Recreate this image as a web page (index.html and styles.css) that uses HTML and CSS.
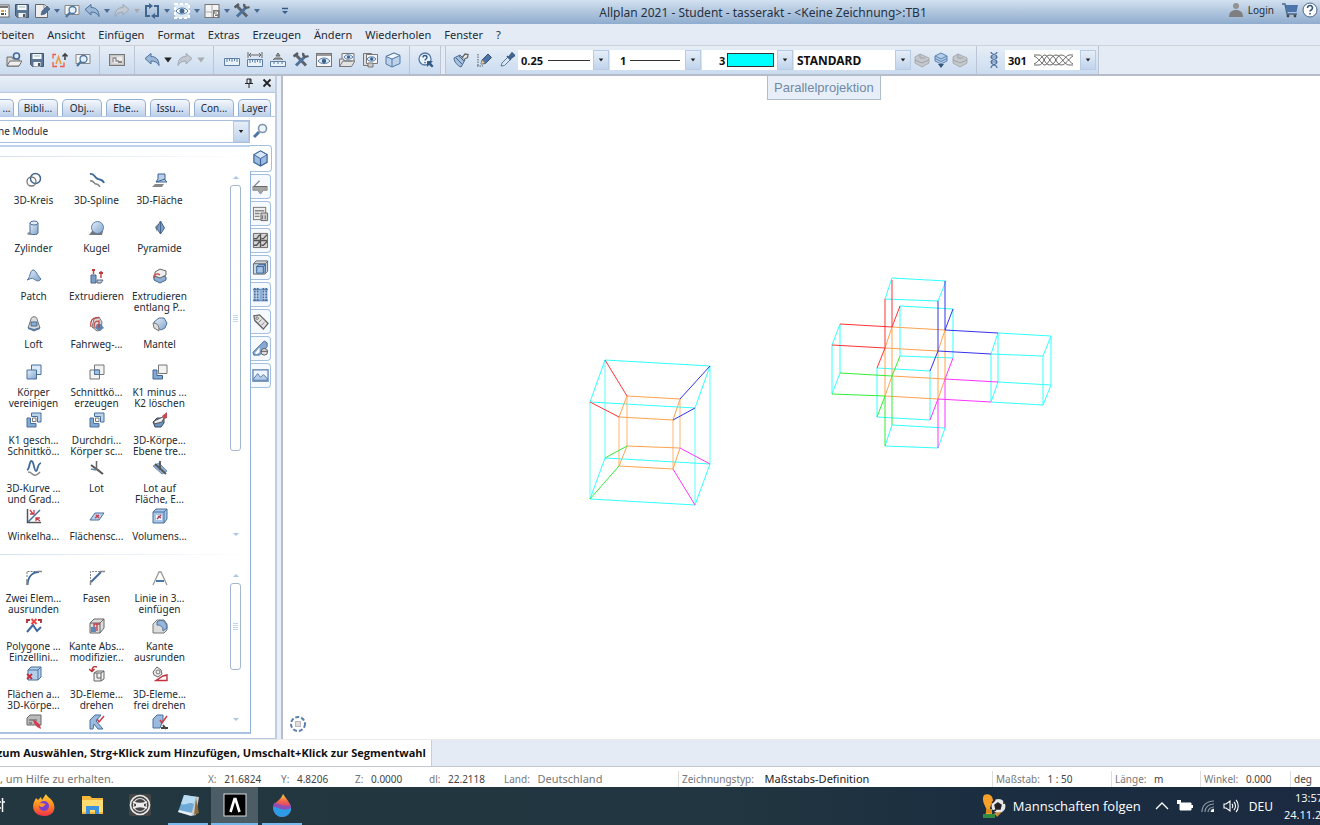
FILE: index.html
```html
<!DOCTYPE html>
<html lang="de">
<head>
<meta charset="utf-8">
<title>Allplan 2021</title>
<link rel="stylesheet" href="styles.css">
</head>
<body>
<svg class="defs" aria-hidden="true">
  <defs>
    <linearGradient id="steel" x1="0" y1="0" x2="1" y2="1"><stop offset="0" stop-color="#e6f0fa"/><stop offset="1" stop-color="#7fa3cc"/></linearGradient>
    <linearGradient id="fire" x1="0" y1="0" x2="0" y2="1"><stop offset="0" stop-color="#ffd43a"/><stop offset=".5" stop-color="#ff8a1f"/><stop offset="1" stop-color="#f0304a"/></linearGradient>
    <linearGradient id="drop" x1="0" y1="0" x2="0" y2="1"><stop offset="0" stop-color="#ffd23c"/><stop offset=".3" stop-color="#f0694a"/><stop offset=".5" stop-color="#e0476e"/></linearGradient>
  </defs>
  <symbol id="grid" viewBox="0 0 16 16"><rect x="1" y="2" width="14" height="12" fill="#fff" stroke="#666"/><path d="M2 3h12v2H2z" fill="#777"/><path d="M3 8h9" stroke="#e8a33a" stroke-width="2" stroke-dasharray="3 1"/><path d="M3 11h9" stroke="#555" stroke-width="2" stroke-dasharray="3 1"/></symbol>
  <symbol id="save" viewBox="0 0 16 16"><path d="M1.500 1.500h13v13h-11l-2-2z" fill="#5c7796" stroke="#46566b"/><path d="M3.500 2h9v5h-9z" fill="#f4f8fc"/><path d="M5 4h6" stroke="#9bb"/><path d="M4.500 10h7v4.500h-7z" fill="#f2f2f2"/><path d="M9 11h2v3H9z" fill="#46566b"/></symbol>
  <symbol id="docpen" viewBox="0 0 16 16"><path d="M1.500 1.500h9l3 3v10h-12z" fill="#eee" stroke="#666"/><path d="M10 1.500v4h4" fill="#fff" stroke="#888"/><path d="M7 12l1-4 5-5 3 3-5 5z" fill="#4f6f95" stroke="#3b5370" stroke-width=".6"/></symbol>
  <symbol id="preview" viewBox="0 0 16 16"><path d="M1 2.500h14v9H1z" fill="#f3f3f3" stroke="#888"/><circle cx="8.500" cy="7" r="3.500" fill="#e5f0fb" stroke="#4a739f" stroke-width="1.300"/><path d="M6 9.500l-4 4.500" stroke="#4a739f" stroke-width="2.200"/></symbol>
  <symbol id="undo" viewBox="0 0 16 16"><path d="M1 6.500L7 1.500v3c5 0 8 3 8 9-1.500-3-4-4.500-8-4.500v3z" fill="#9db8d6" stroke="#4a6f9b"/></symbol>
  <symbol id="redo" viewBox="0 0 16 16"><path d="M15 6.500L9 1.500v3c-5 0-8 3-8 9 1.500-3 4-4.500 8-4.500v3z" fill="#c3c9d0" stroke="#9ea7b2"/></symbol>
  <symbol id="loop" viewBox="0 0 16 16"><path d="M6 3H2v10h4M10 13h4V3h-4" fill="none" stroke="#41658f" stroke-width="2"/><path d="M5 0l4 3-4 3zM11 10l-4 3 4 3z" fill="#41658f"/></symbol>
  <symbol id="eyebox" viewBox="0 0 16 16"><rect x="1" y="1" width="14" height="14" fill="#dbe8f5" stroke="#fff" stroke-width="2" stroke-dasharray="3 2"/><path d="M2 8c3-4 9-4 12 0-3 4-9 4-12 0z" fill="#fff" stroke="#5a7ea8"/><circle cx="8" cy="8" r="2.500" fill="#44698f"/></symbol>
  <symbol id="split" viewBox="0 0 16 16"><rect x="1" y="1.500" width="14" height="13" fill="#f4f4f4" stroke="#777"/><path d="M8 2v12M2 9h6" stroke="#aaa"/><path d="M9 7h6.500v8H9z" fill="#777"/><path d="M10.500 9h3v2h-3v2.500h3" fill="none" stroke="#fff"/></symbol>
  <symbol id="tools" viewBox="0 0 16 16"><path d="M3 3l10 10.500" stroke="#5e636b" stroke-width="3"/><path d="M12.500 4L3 13.500" stroke="#4c739d" stroke-width="3"/><path d="M.5 4.500L5 1M10.500 1c-1 3 1 4.500 5 3" fill="none" stroke="#555b63" stroke-width="2.400"/></symbol>
  <symbol id="open" viewBox="0 0 16 16"><path d="M1 5h5l1 2h6v7H1z" fill="#d7d7d7" stroke="#6c6c6c"/><path d="M1 14l3-5h12l-3 5z" fill="#efefef" stroke="#6c6c6c"/><circle cx="10.500" cy="4" r="3" fill="#dceafa" stroke="#41689a" stroke-width="1.600"/></symbol>
  <symbol id="exporta" viewBox="0 0 16 16"><path d="M4 2.500H1v4M1 10v4.500h4M8 14.500h4v-4" fill="none" stroke="#ee5a45" stroke-width="1.300"/><path d="M4 12l2.500-7L9 12" fill="none" stroke="#ef9a3e" stroke-width="1.600"/><path d="M13 8V2M10.500 4.500L13 2l2.500 2.500" fill="none" stroke="#444" stroke-width="1.600"/></symbol>
  <symbol id="sheet" viewBox="0 0 16 16"><rect x=".5" y="2.500" width="15" height="11" fill="#c4c4c4" stroke="#777"/><path d="M2.500 4.500h11v7h-11z" fill="#ededed"/><path d="M4 10.500V6h3v3h3" fill="none" stroke="#8a8a8a" stroke-width="1.300"/><path d="M9 9h4v2H9z" fill="#888"/></symbol>
  <symbol id="ruler" viewBox="0 0 16 16"><path d="M.5 6.500h15v7H.5z" fill="#e9f1fa" stroke="#5c7da4"/><path d="M3 7v3M5.500 7v2M8 7v3M10.500 7v2M13 7v3" stroke="#5c7da4"/></symbol>
  <symbol id="rulerw" viewBox="0 0 16 16"><path d="M.5 7.500h15v7H.5z" fill="#e9f1fa" stroke="#5c7da4"/><path d="M3 8v3M5.500 8v2M8 8v3M10.500 8v2M13 8v3" stroke="#5c7da4"/><path d="M1 0v6M15 0v6M2 3h12M4 1L2 3l2 2M12 1l2 2-2 2" fill="none" stroke="#666"/></symbol>
  <symbol id="rulera" viewBox="0 0 16 16"><path d="M.5 9.500h15v5H.5z" fill="#e9f1fa" stroke="#5c7da4"/><path d="M4 10v2M8 10v2M12 10v2" stroke="#5c7da4"/><path d="M3 8l2-2h6l2 2M6 4l2-3 2 3z" fill="#999" stroke="#666"/></symbol>
  <symbol id="eyewin" viewBox="0 0 16 16"><rect x=".5" y="1.500" width="15" height="13" fill="#f4f6f8" stroke="#777"/><path d="M1 2h14v2H1z" fill="#999"/><path d="M2 9c3-4 9-4 12 0-3 3.500-9 3.500-12 0z" fill="#dcebfa" stroke="#5a7ea8"/><circle cx="8" cy="9" r="2.200" fill="#3b628e"/></symbol>
  <symbol id="eyefolder" viewBox="0 0 16 16"><path d="M3 8V1.500h12V9" fill="#f3f3f3" stroke="#777"/><path d="M5 5c2-3 6-3 9 0-3 3-7 3-9 0z" fill="#dcebfa" stroke="#5a7ea8"/><circle cx="9.500" cy="5" r="1.600" fill="#3b628e"/><path d="M.5 14.500V7h4l1 2h8M.5 14.500L4 9h12l-3.500 5.500z" fill="#e2e2e2" stroke="#777"/></symbol>
  <symbol id="eyepages" viewBox="0 0 16 16"><path d="M1.500 1.500h8v12h-8z" fill="#ddd" stroke="#777"/><path d="M4.500 2.500h11v9h-11z" fill="#f6f6f6" stroke="#777"/><path d="M5 7c2-3 7-3 9 0-2 3-7 3-9 0z" fill="#dcebfa" stroke="#5a7ea8"/><circle cx="9.700" cy="7" r="1.700" fill="#3b628e"/><path d="M6 11h5v4H6z" fill="#ccc" stroke="#777"/></symbol>
  <symbol id="cube" viewBox="0 0 16 16"><path d="M1 4.500L9 1l6 2.500v8L7 15l-6-3z" fill="#bcd2ea" stroke="#5179a5"/><path d="M1 4.500L7 7l8-3.500L9 1z" fill="#eff6fd" stroke="#5179a5"/><path d="M7 7v8" stroke="#5179a5"/></symbol>
  <symbol id="helpq" viewBox="0 0 16 16"><circle cx="7" cy="7" r="6" fill="#eaf2fb" stroke="#5479a5" stroke-width="1.300"/><path d="M5 5.500c0-3 4-2.500 4 0 0 1.500-2 1.500-2 3M7 10v1.300" fill="none" stroke="#35597f" stroke-width="1.400"/><path d="M9 9h6l-2 2 2.500 3-1.500 1.500-3-2.500-2 2z" fill="#35597f"/></symbol>
  <symbol id="brush" viewBox="0 0 16 16"><path d="M1 6l6-3 5 5-4 7C5 14 1 10 1 6z" fill="#a7bfdc" stroke="#46678e"/><path d="M3 6l6 6M6 4l5 5" stroke="#46678e"/><path d="M9 6l3-4 3 .5-.5 3-3 1.500" fill="#eee" stroke="#666" stroke-width="1.300"/></symbol>
  <symbol id="pencils" viewBox="0 0 16 16"><path d="M2 2v12M1 14h6" stroke="#555" stroke-dasharray="1.500 1"/><path d="M5 12l1-4 6-6 3.500 3.500-6 6z" fill="#4b74a5" stroke="#33557c"/><path d="M5 12l1-4 3 3z" fill="#e7c38c"/></symbol>
  <symbol id="dropper" viewBox="0 0 16 16"><path d="M2 14l1-3 6-6 2.500 2.500-6 6z" fill="#dbe8f5" stroke="#58799f"/><path d="M8 4l4 4M10 5l3-4 2.500 2.500-4 3z" stroke="#3d5f88" stroke-width="1.600" fill="#4b6f99"/></symbol>
  <symbol id="layersg" viewBox="0 0 16 16"><path d="M1 5l5-3 9 4v5l-7 4-7-4z" fill="#c4c7cb" stroke="#a8acb2"/><path d="M1 8l7 3 7-3M6 2v4h5" fill="none" stroke="#9ea3aa"/></symbol>
  <symbol id="layersb" viewBox="0 0 16 16"><path d="M2 4l6-3 6 3v5l-6 3-6-3z" fill="#b3cdea" stroke="#5a82b0"/><path d="M2 4l6 3 6-3M2 6.500l6 3 6-3" fill="none" stroke="#5a82b0"/><path d="M5 12h6l-3 4z" fill="#33557c"/></symbol>
  <symbol id="chain" viewBox="0 0 16 16"><path d="M5 0c0 3 6 2 6 5s-6 2-6 5 6 2 6 6M11 0c0 3-6 2-6 5s6 2 6 5-6 2-6 6M5 5h6M5 10h6" fill="none" stroke="#4d73a0" stroke-width="1.200"/></symbol>
  <symbol id="user" viewBox="0 0 16 16"><circle cx="8" cy="4" r="3" fill="#929292"/><path d="M1 15c0-5 3-7 7-7s7 2 7 7z" fill="#7e7e7e"/></symbol>
  <symbol id="cart" viewBox="0 0 16 16"><path d="M0 2h3l2 10h10" fill="none" stroke="#49658a" stroke-width="1.400"/><path d="M3.500 3H16l-1.500 7H5z" fill="#4d74aa"/><circle cx="6" cy="14" r="1.400" fill="#444"/><circle cx="13" cy="14" r="1.400" fill="#444"/></symbol>
  <symbol id="quest" viewBox="0 0 16 16"><circle cx="8" cy="8" r="7" fill="#fff" stroke="#49658a"/><path d="M5.500 6c0-3.500 5-3 5 0 0 2-2.500 2-2.500 3.500M8 11v1.500" fill="none" stroke="#35597f" stroke-width="1.600"/></symbol>
  <symbol id="mag" viewBox="0 0 16 16"><circle cx="10.500" cy="5.500" r="4" fill="#eef5fd" stroke="#7e93ac" stroke-width="1.600"/><path d="M7 9l-5 5" stroke="#4a73a5" stroke-width="3"/></symbol>
  <symbol id="pin" viewBox="0 0 10 10"><path d="M3 1h4v4.500H3zM1 5.500h8M5 6v4M6 1v4" fill="none" stroke="#222"/></symbol>
  <symbol id="close" viewBox="0 0 10 10"><path d="M1.500 1.500l7 7M8.500 1.500l-7 7" stroke="#222" stroke-width="1.800"/></symbol>

  <symbol id="kreis" viewBox="0 0 16 16"><circle cx="9.500" cy="6.500" r="5" fill="none" stroke="#41658f" stroke-width="1.500"/><circle cx="5.500" cy="9.500" r="4.500" fill="none" stroke="#777" stroke-width="1.300"/></symbol>
  <symbol id="spline" viewBox="0 0 16 16"><path d="M1 2c5-1 4 4 8 5 3 .5 5 1 6 4" fill="none" stroke="#3f6a9c" stroke-width="1.900"/><path d="M1 9c4-1 4 3 6 3s3 1 4 3" fill="none" stroke="#888" stroke-width="1.500"/></symbol>
  <symbol id="flaeche" viewBox="0 0 16 16"><path d="M6 2h7v6l2 2H4l2-3z" fill="#b7cfeb" stroke="#3d628f"/><path d="M4 10l9-3" stroke="#3d628f"/><path d="M0 15l3-3h9l-2 3z" fill="#888"/></symbol>
  <symbol id="zyl" viewBox="0 0 16 16"><path d="M1 13l5-2h5v4H2z" fill="#999"/><path d="M4 3v10c0 2 8 2 8 0V3" fill="url(#steel)" stroke="#4d6f96"/><ellipse cx="8" cy="3" rx="4" ry="2" fill="#e2edf9" stroke="#4d6f96"/></symbol>
  <symbol id="kugel" viewBox="0 0 16 16"><path d="M0 15l3-4h11l-1 4z" fill="#777"/><circle cx="8.500" cy="7.500" r="6" fill="url(#steel)" stroke="#5e80a8"/></symbol>
  <symbol id="pyr" viewBox="0 0 16 16"><path d="M3 7l3-3-1 8z" fill="#888"/><path d="M8.500 1l4 7-4 6-4-6z" fill="#7e9fc5" stroke="#44678f"/><path d="M8.500 1v13" stroke="#44678f"/></symbol>
  <symbol id="patch" viewBox="0 0 16 16"><path d="M1 12C4 11 4 2 7 2s4 5 8 9c-2 3-5 2-7 0-2-1.500-4 0-7 1z" fill="url(#steel)" stroke="#52759f"/></symbol>
  <symbol id="extr" viewBox="0 0 16 16"><path d="M2 7h5v8H2z" fill="#7c9dc4" stroke="#44678f"/><path d="M8 12h6l-2 3H8z" fill="#b9cde5" stroke="#667"/><path d="M4.500 1v5M12 3v7" stroke="#c23a3a" stroke-width="1.400"/><path d="M3 1h3v2H3zM10 4h4v2h-4z" fill="#c23a3a"/></symbol>
  <symbol id="extrp" viewBox="0 0 16 16"><path d="M2 9l6-3 6 3v3l-6 3-6-3z" fill="#8eafd3" stroke="#44678f"/><path d="M3 4l5-3 6 2v4l-6 3-5-2z" fill="#eee" stroke="#666"/><path d="M2 10C1 6 5 5 8 7" fill="none" stroke="#d03b3b" stroke-width="1.300"/></symbol>
  <symbol id="loft" viewBox="0 0 16 16"><path d="M5 3c0-3 6-3 6 0l3 9-6 3-6-3z" fill="#ddd" stroke="#777"/><path d="M5 6h6v4H5z" fill="#8eafd3" stroke="#44678f"/><path d="M2 11l6 2 6-2v2l-6 2-6-2z" fill="#567ba6"/></symbol>
  <symbol id="fahr" viewBox="0 0 16 16"><path d="M5 3l5-2 3 5-1 8-4 1-5-4z" fill="#d5d5d5" stroke="#777"/><path d="M8 8h4l3 4-5 3-4-3z" fill="#5e84b0"/><path d="M10 2C3 0 1 6 2 11M5 12c0-6 1-7 5-7v7" fill="none" stroke="#c63c3c" stroke-width="1.200"/></symbol>
  <symbol id="mantel" viewBox="0 0 16 16"><path d="M2 6l5-4 5 0 3 5-2 5-4 2-5-3z" fill="url(#steel)" stroke="#4f739c"/><path d="M1 7c5 0 6 3 6 8L2 12z" fill="#ddd" stroke="#777"/></symbol>
  <symbol id="union" viewBox="0 0 16 16"><path d="M5.500 1H15v9.500H5.500z" fill="#dbe9f8" stroke="#46709e"/><path d="M1 6h9.500v9H1z" fill="url(#steel)" stroke="#46709e"/></symbol>
  <symbol id="inter" viewBox="0 0 16 16"><path d="M5.500 1H15v9.500H5.500zM1 6h9.500v9H1z" fill="#f3f3f3" stroke="#777"/><path d="M5.500 6h5v4.500h-5z" fill="#9fbfe2" stroke="#4c739e"/></symbol>
  <symbol id="minus" viewBox="0 0 16 16"><path d="M6.500 1H15v8.500H6.500z" fill="#f3f3f3" stroke="#777"/><path d="M1 6h4v5.500h5.500V15H1z" fill="#84a9d2" stroke="#3c638f"/></symbol>
  <symbol id="split2" viewBox="0 0 16 16"><path d="M5.500 1H15v9h-3.500V4.500h-6z" fill="#bed4ec" stroke="#46709e"/><path d="M1 6h3.500v5.500H10V15H1z" fill="#84a9d2" stroke="#46709e"/><path d="M6.500 6H10v3.500H6.500z" fill="#fff" stroke="#777"/></symbol>
  <symbol id="trenn" viewBox="0 0 16 16"><path d="M1 10l4-4h7v5l-3 4H3z" fill="#6f94bf" stroke="#37495e"/><path d="M2 9L13 4l-3 6-8 2z" fill="#eee" stroke="#555"/><path d="M10 4l5-4v6l-3 1z" fill="#c44a55"/></symbol>
  <symbol id="kurve" viewBox="0 0 16 16"><path d="M1 10C4 9 3 1 5.500 1S8 11 10 11s1-7 5-8" fill="none" stroke="#3f6a9c" stroke-width="1.800"/><path d="M2 12c4 0 3 2 6 3s4-1 6-3" fill="none" stroke="#888" stroke-width="1.500"/></symbol>
  <symbol id="lot" viewBox="0 0 16 16"><path d="M2 5l12 9" stroke="#555" stroke-width="2"/><path d="M7.500 1v8M7 9l4 2" stroke="#666" stroke-width="1.500"/><path d="M2 9l5 1" stroke="#6788b0" stroke-width="1.500"/></symbol>
  <symbol id="lotf" viewBox="0 0 16 16"><path d="M1 6l6-3 8 8-5 3z" fill="#8eafd3" stroke="#7090b5"/><path d="M3 4l11 10M8 1v9" stroke="#555" stroke-width="1.800"/></symbol>
  <symbol id="winkel" viewBox="0 0 16 16"><path d="M1.500 1v13.500H15" fill="none" stroke="#555" stroke-width="1.500"/><path d="M2 14L14 2" stroke="#3f6a9c" stroke-width="1.500"/><path d="M4 2l3 4M8 2v4H4M10 10l4 3M10 13v-3h4" fill="none" stroke="#c63c4c" stroke-width="1.300"/></symbol>
  <symbol id="fsch" viewBox="0 0 16 16"><path d="M1 12l5-7h9l-5 7z" fill="#bdd3ec" stroke="#46709e"/><path d="M6 10l4-3M7 7l3 3" stroke="#c63c4c" stroke-width="1.500"/></symbol>
  <symbol id="vsch" viewBox="0 0 16 16"><path d="M1 4l3-3h11v10l-3 4H1z" fill="#a9c5e5" stroke="#46709e"/><path d="M1 4h11v11M12 4l3-3" fill="none" stroke="#46709e"/><path d="M4 7h6v5H4z" fill="#eef4fb"/><path d="M5 11l4-4M6 8l3 2" stroke="#a84052" stroke-width="1.300"/></symbol>
  <symbol id="round" viewBox="0 0 16 16"><path d="M1 7V1.500h15" fill="none" stroke="#777" stroke-dasharray="2 1"/><path d="M1.500 15C2 6 7 2 13 2" fill="none" stroke="#3f6a9c" stroke-width="1.900"/><path d="M1 9v6M11 1.500h5" stroke="#888" stroke-width="1.500"/></symbol>
  <symbol id="fasen" viewBox="0 0 16 16"><path d="M1.500 15V1.500H16" fill="none" stroke="#888" stroke-dasharray="2 1"/><path d="M2 12L12 2" stroke="#3f6a9c" stroke-width="1.900"/><path d="M1.500 11v4M11 1.500h5" stroke="#888" stroke-width="1.500"/></symbol>
  <symbol id="linie" viewBox="0 0 16 16"><path d="M1 15L7 2h2l6 13" fill="none" stroke="#999" stroke-width="1.300"/><path d="M4 11h8" stroke="#4a77ab" stroke-width="2"/></symbol>
  <symbol id="poly" viewBox="0 0 16 16"><path d="M1 14l6-7 4 6 4-4" fill="none" stroke="#3f6a9c" stroke-width="2"/><path d="M1 5V2h3M12 2h3v3" fill="none" stroke="#a33" stroke-width="1.800"/><path d="M5.500 1l5 5M10.500 1l-5 5" stroke="#ea4444" stroke-width="2"/></symbol>
  <symbol id="kabs" viewBox="0 0 16 16"><path d="M1 5l4-4h10v9l-4 5H1z" fill="#ddd" stroke="#666"/><path d="M1 5h10v10M11 5l4-4" fill="none" stroke="#666"/><path d="M2 9h5v5H2z" fill="#5f86b4"/><path d="M5 9V6h6M8 6v7" fill="none" stroke="#c63c4c" stroke-width="1.400"/></symbol>
  <symbol id="kround" viewBox="0 0 16 16"><path d="M1 6l4-4h7l3 4v6l-3 3H1z" fill="#ddd" stroke="#777"/><path d="M5 4c5-4 10 0 10 6l-4 3c0-4-2-6-6-6z" fill="#95b6da" stroke="#46709e"/></symbol>
  <symbol id="flx" viewBox="0 0 16 16"><path d="M2 4l3-3h10v10l-3 3H2z" fill="#b5cfeb" stroke="#46709e"/><path d="M12 14V4l3-3M2 4h10" fill="none" stroke="#46709e"/><path d="M1 8l5 5M6 8l-5 5" stroke="#c4303c" stroke-width="1.800"/></symbol>
  <symbol id="rot" viewBox="0 0 16 16"><path d="M5 7l3-2h7v8l-3 2H5z" fill="#eee" stroke="#666"/><path d="M5 7h7v8M12 7l3-2M8 7v5h4" fill="none" stroke="#666"/><path d="M8 1C5 0 3 1 3 5M0 3l3 2.500L5.500 3" fill="none" stroke="#b33" stroke-width="1.400"/></symbol>
  <symbol id="frot" viewBox="0 0 16 16"><path d="M1 6l4-5 4 3 1 4-4 3-4-2z" fill="#eee" stroke="#666"/><circle cx="6" cy="6" r="2" fill="none" stroke="#777"/><path d="M4 14.500h11V9l-4 1z" fill="none" stroke="#c1303c" stroke-width="1.400"/></symbol>
  <symbol id="b1" viewBox="0 0 16 16"><path d="M1 4l3-3h11v10H1z" fill="#bbb" stroke="#666"/><path d="M3 6h8M3 9h3" stroke="#555"/><path d="M7 6l3 1 4 4 1 4-4-2-3-4z" fill="#d33b50"/></symbol>
  <symbol id="b2" viewBox="0 0 16 16"><path d="M1 6l5-5h6l-5 6 7 8h-5L5 10l-1 5H1z" fill="#9abade" stroke="#46709e"/><path d="M8 5l2 3 5-6" fill="none" stroke="#d13b44" stroke-width="1.500"/></symbol>
  <symbol id="b3" viewBox="0 0 16 16"><path d="M1 5l4-4h6v5l-3 8H1z" fill="#9abade" stroke="#46709e"/><path d="M8 6l2 3 5-7" fill="none" stroke="#d13b44" stroke-width="1.500"/><path d="M9 14h7M11 11l3 4" stroke="#444" stroke-width="2"/></symbol>

  <symbol id="s1" viewBox="0 0 18 18"><path d="M2 5l7-4 7 4v8l-7 4-7-4z" fill="#9dbbe0" stroke="#3e669a" stroke-width="1.300"/><path d="M2 5l7 4 7-4-7-4z" fill="#d9e8f8" stroke="#3e669a"/><path d="M9 9v8" stroke="#3e669a" stroke-width="1.300"/></symbol>
  <symbol id="s2" viewBox="0 0 18 18"><path d="M1 10L8 3" stroke="#888" stroke-width="1.400"/><path d="M1 9h15v4h-4l-3 4-3-4H1z" fill="#a5a5a5" stroke="#888"/><path d="M2 9h14" stroke="#666"/></symbol>
  <symbol id="s3" viewBox="0 0 18 18"><rect x="1.500" y="2.500" width="13" height="13" fill="#eee" stroke="#777"/><path d="M3 6h10M3 9h5M3 12h5" stroke="#888" stroke-width="1.500"/><path d="M9.500 8.500h7v8h-7z" fill="#ccc" stroke="#666"/><path d="M11 11v4M14 11v4" stroke="#666"/></symbol>
  <symbol id="s4" viewBox="0 0 18 18"><path d="M1.500 1.500h15v15h-15z" fill="#d5d5d5" stroke="#666"/><path d="M2 9h14M9 2v14M2 7h3l3-4M2 14h3l3-4M10 7h2l4-4M10 14h2l4-4" fill="none" stroke="#555" stroke-width="1.400"/></symbol>
  <symbol id="s5" viewBox="0 0 18 18"><path d="M1.500 5l3-3h12v11l-3 3h-12z" fill="#cbd5e0" stroke="#666"/><path d="M2 5h12v11M14 5l3-3" fill="none" stroke="#666"/><path d="M5 8l2-2h7v7l-2 2H5z" fill="#a5c2e6" stroke="#365f94"/><path d="M5 8h7v7M12 8l2-2" fill="none" stroke="#365f94"/></symbol>
  <symbol id="s6" viewBox="0 0 18 18"><path d="M1 2h16v15H1z" fill="#c1d6ee"/><path d="M3 2v15M6 2v15M12 2v15M15 2v15" stroke="#456c9c" stroke-width="1.800" stroke-dasharray="2 1"/><path d="M1 4h16M1 15h16" stroke="#456c9c"/><path d="M8 4h3v11H8z" fill="#8aaed6"/></symbol>
  <symbol id="s7" viewBox="0 0 18 18"><path d="M2 3l6-1 9 9-5 6-9-9z" fill="#e3e3e3" stroke="#666" stroke-width="1.400"/><circle cx="5.500" cy="5.500" r="1.300" fill="#fff" stroke="#666"/><path d="M7 10l3-3M10 13l3-3" stroke="#777"/></symbol>
  <symbol id="s8" viewBox="0 0 18 18"><path d="M1 13L13 1l3 2v4l-8 9H2z" fill="#86a9d3" stroke="#44698f"/><path d="M3 14l5-6v5l-3 2z" fill="#fff"/><ellipse cx="13" cy="12.500" rx="3.500" ry="3.500" fill="#ddd" stroke="#555"/><path d="M9.500 12h7" stroke="#555"/></symbol>
  <symbol id="s9" viewBox="0 0 18 18"><rect x="1" y="3" width="16" height="12" fill="#eef5fc" stroke="#6c8db5" stroke-width="1.500"/><path d="M2 12l4-5 3 4 3-3 4 4v2H2z" fill="#b5cfeb" stroke="#5378a4"/></symbol>
  <symbol id="arrow" viewBox="0 0 8 8"><path d="M1 2h6L4 6z" fill="currentColor"/></symbol>
</svg>

<div class="app">
  <header class="titlebar">
    <div class="quick">
      <button class="q" aria-label="Tabelle"><svg><use href="#grid"/></svg></button>
      <button class="q" aria-label="Speichern"><svg><use href="#save"/></svg></button>
      <button class="q" aria-label="Neu"><svg><use href="#docpen"/></svg></button><svg class="dd"><use href="#arrow"/></svg>
      <button class="q" aria-label="Vorschau"><svg><use href="#preview"/></svg></button>
      <button class="q" aria-label="Zurück"><svg><use href="#undo"/></svg></button><svg class="dd"><use href="#arrow"/></svg>
      <button class="q" aria-label="Vor"><svg><use href="#redo"/></svg></button><svg class="dd pale"><use href="#arrow"/></svg>
      <button class="q" aria-label="Aktualisieren"><svg><use href="#loop"/></svg></button><svg class="dd"><use href="#arrow"/></svg>
      <button class="q" aria-label="Ansicht"><svg><use href="#eyebox"/></svg></button><svg class="dd"><use href="#arrow"/></svg>
      <button class="q" aria-label="Fenster"><svg><use href="#split"/></svg></button><svg class="dd"><use href="#arrow"/></svg>
      <button class="q" aria-label="Werkzeuge"><svg><use href="#tools"/></svg></button><svg class="dd"><use href="#arrow"/></svg>
      <button class="q more" aria-label="Anpassen"><svg viewBox="0 0 16 16"><path d="M5 5.500h6" stroke="#355a86" stroke-width="1.500"/><path d="M5 8h6l-3 3z" fill="#355a86"/></svg></button>
    </div>
    <h1>Allplan 2021 - Student - tasserakt - &lt;Keine Zeichnung&gt;:TB1</h1>
    <div class="account">
      <button class="login"><svg><use href="#user"/></svg>Login</button>
      <button class="q" aria-label="Shop"><svg><use href="#cart"/></svg></button>
      <button class="q" aria-label="Hilfe"><svg><use href="#quest"/></svg></button>
    </div>
  </header>

  <nav class="menu">
    <button>rbeiten</button><button>Ansicht</button><button>Einfügen</button><button>Format</button><button>Extras</button><button>Erzeugen</button><button>Ändern</button><button>Wiederholen</button><button>Fenster</button><button>?</button>
  </nav>

  <div class="toolbar">
    <div class="grp g1">
      <button class="tb" aria-label="Öffnen"><svg><use href="#open"/></svg></button><button class="tb" aria-label="Speichern"><svg><use href="#save"/></svg></button><button class="tb" aria-label="Exportieren"><svg><use href="#exporta"/></svg></button><button class="tb" aria-label="Druckvorschau"><svg><use href="#preview"/></svg></button>
    </div>
    <div class="grp g2"><button class="tb" aria-label="Plan"><svg><use href="#sheet"/></svg></button></div>
    <div class="grp g3">
      <button class="tb" aria-label="Rückgängig"><svg><use href="#undo"/></svg></button><svg class="drop dark"><use href="#arrow"/></svg><button class="tb" aria-label="Wiederherstellen"><svg><use href="#redo"/></svg></button><svg class="drop"><use href="#arrow"/></svg>
    </div>
    <div class="grp g4">
      <button class="tb" aria-label="Messen"><svg><use href="#ruler"/></svg></button><button class="tb" aria-label="Länge messen"><svg><use href="#rulerw"/></svg></button><button class="tb" aria-label="Maßstab"><svg><use href="#rulera"/></svg></button><button class="tb" aria-label="Optionen"><svg><use href="#tools"/></svg></button><button class="tb" aria-label="Bildschirmdarstellung"><svg><use href="#eyewin"/></svg></button><button class="tb" aria-label="Teilbilder"><svg><use href="#eyefolder"/></svg></button><button class="tb" aria-label="Pläne"><svg><use href="#eyepages"/></svg></button><button class="tb" aria-label="Körper"><svg><use href="#cube"/></svg></button>
    </div>
    <div class="grp g5"><button class="tb" aria-label="Direkthilfe"><svg><use href="#helpq"/></svg></button></div>
    <div class="grp g6">
      <button class="tb" aria-label="Übernehmen"><svg><use href="#brush"/></svg></button><button class="tb" aria-label="Stift"><svg><use href="#pencils"/></svg></button><button class="tb" aria-label="Pipette"><svg><use href="#dropper"/></svg></button>
      <div class="combo"><select aria-label="Stiftdicke"><option>0.25</option></select><svg class="line" viewBox="0 0 42 10"><path d="M0 5.500h42" stroke="#333"/></svg><svg class="arr"><use href="#arrow"/></svg></div>
      <div class="combo"><select class="in10" aria-label="Strichart"><option>1</option></select><svg class="line wide" viewBox="0 0 50 10"><path d="M0 5.500h50" stroke="#333"/></svg><svg class="arr"><use href="#arrow"/></svg></div>
      <div class="combo"><select class="in17" aria-label="Linienfarbe"><option>3</option></select><span class="swatch"></span><svg class="arr"><use href="#arrow"/></svg></div>
      <div class="combo layer"><select aria-label="Layer"><option>STANDARD</option></select><svg class="arr"><use href="#arrow"/></svg></div>
      <button class="tb slim" aria-label="Layer zurück"><svg><use href="#layersg"/></svg></button><button class="tb slim" aria-label="Layer wählen"><svg><use href="#layersb"/></svg></button><button class="tb slim" aria-label="Layer vor"><svg><use href="#layersg"/></svg></button>
    </div>
    <div class="grp g7">
      <button class="tb" aria-label="Musterlinie"><svg><use href="#chain"/></svg></button>
      <div class="combo"><select aria-label="Muster"><option>301</option></select><svg class="wave" viewBox="0 0 40 12"><path d="M0 1h5c5 0 5 10 11 10S22 1 27 1s7 6 12 9M0 11h5c5 0 5-10 11-10s6 10 11 10 7-6 12-9M0 10C6 7 8 1 11 1s6 10 11 10S32 1 35 1h4M0 2c6 3 8 9 11 9S17 1 22 1s8 10 13 10h4" fill="none" stroke="#444" stroke-width=".8"/></svg><svg class="arr"><use href="#arrow"/></svg></div>
    </div>
  </div>

  <main class="work">
    <aside class="panel">
      <div class="phead"><button aria-label="Anheften"><svg><use href="#pin"/></svg></button><button aria-label="Schließen"><svg><use href="#close"/></svg></button></div>
      <div class="tabs"><button class="first">...</button><button>Bibli...</button><button>Obj...</button><button>Ebe...</button><button>Issu...</button><button>Con...</button><button class="last">Layer</button></div>
      <div class="pbody">
        <div class="find">
          <div class="mod"><select aria-label="Modul"><option>ne Module</option></select><svg class="arr"><use href="#arrow"/></svg></div>
          <button class="q" aria-label="Suchen"><svg><use href="#mag"/></svg></button>
        </div>
        <div class="pal">
          <div class="groups">
            <section class="group one">
              <div class="tools">
                <button><svg><use href="#kreis"/></svg>3D-Kreis</button><button><svg><use href="#spline"/></svg>3D-Spline</button><button><svg><use href="#flaeche"/></svg>3D-Fläche</button>
                <button><svg><use href="#zyl"/></svg>Zylinder</button><button><svg><use href="#kugel"/></svg>Kugel</button><button><svg><use href="#pyr"/></svg>Pyramide</button>
                <button><svg><use href="#patch"/></svg>Patch</button><button><svg><use href="#extr"/></svg>Extrudieren</button><button><svg><use href="#extrp"/></svg>Extrudieren<br>entlang P...</button>
                <button><svg><use href="#loft"/></svg>Loft</button><button><svg><use href="#fahr"/></svg>Fahrweg-...</button><button><svg><use href="#mantel"/></svg>Mantel</button>
                <button><svg><use href="#union"/></svg>Körper<br>vereinigen</button><button><svg><use href="#inter"/></svg>Schnittkö...<br>erzeugen</button><button><svg><use href="#minus"/></svg>K1 minus ...<br>K2 löschen</button>
                <button><svg><use href="#split2"/></svg>K1 gesch...<br>Schnittkö...</button><button><svg><use href="#split2"/></svg>Durchdri...<br>Körper sc...</button><button><svg><use href="#trenn"/></svg>3D-Körpe...<br>Ebene tre...</button>
                <button><svg><use href="#kurve"/></svg>3D-Kurve ...<br>und Grad...</button><button><svg><use href="#lot"/></svg>Lot</button><button><svg><use href="#lotf"/></svg>Lot auf<br>Fläche, E...</button>
                <button><svg><use href="#winkel"/></svg>Winkelha...</button><button><svg><use href="#fsch"/></svg>Flächensc...</button><button><svg><use href="#vsch"/></svg>Volumens...</button>
              </div>
              <div class="scroll"><i class="up"></i><b></b><i class="down"></i></div>
            </section>
            <section class="group two">
              <div class="tools">
                <button><svg><use href="#round"/></svg>Zwei Elem...<br>ausrunden</button><button><svg><use href="#fasen"/></svg>Fasen</button><button><svg><use href="#linie"/></svg>Linie in 3...<br>einfügen</button>
                <button><svg><use href="#poly"/></svg>Polygone ...<br>Einzellini...</button><button><svg><use href="#kabs"/></svg>Kante Abs...<br>modifizier...</button><button><svg><use href="#kround"/></svg>Kante<br>ausrunden</button>
                <button><svg><use href="#flx"/></svg>Flächen a...<br>3D-Körpe...</button><button><svg><use href="#rot"/></svg>3D-Eleme...<br>drehen</button><button><svg><use href="#frot"/></svg>3D-Eleme...<br>frei drehen</button>
                <button aria-label="Löschen"><svg><use href="#b1"/></svg></button><button aria-label="Prüfen"><svg><use href="#b2"/></svg></button><button aria-label="Prüfen und messen"><svg><use href="#b3"/></svg></button>
              </div>
              <div class="scroll"><i class="up"></i><b></b><i class="down"></i></div>
            </section>
          </div>
          <div class="side">
            <button class="on" aria-label="Modellieren"><svg><use href="#s1"/></svg></button><button aria-label="Gelände"><svg><use href="#s2"/></svg></button><button aria-label="Pläne"><svg><use href="#s3"/></svg></button><button aria-label="Raster"><svg><use href="#s4"/></svg></button><button aria-label="Objekte"><svg><use href="#s5"/></svg></button><button aria-label="Bewehrung"><svg><use href="#s6"/></svg></button><button aria-label="Etikett"><svg><use href="#s7"/></svg></button><button aria-label="Bauteil"><svg><use href="#s8"/></svg></button><button aria-label="Bild"><svg><use href="#s9"/></svg></button>
          </div>
        </div>
      </div>
    </aside>

    <section class="canvas">
      <svg class="drawing" viewBox="283 76 1037 663" role="img" aria-label="Tesserakt und sein Netz">
        <g class="cyan">
          <path d="M605 360L710 366L695 408L590 402ZM605 458L710 464L695 505L590 499Z"/>
          <path class="soft" d="M605 360V458M710 366V464M695 408V505M590 402V499"/>
          <path d="M892 278L946 281L938 301L885 299ZM840 324L832 345V394L840 373ZM900 306L953 309V358L900 356ZM877 368L930 371V420L877 417ZM892 425L945 428L938 448L885 446Z"/>
          <path d="M998 333L1051 336L1043 356L991 354ZM998 382L1051 385L1043 405L991 402ZM998 333V382M1051 336V385M1043 356V405M991 354V402"/>
        </g>
        <g class="orange">
          <path d="M627 396L680 399L673 420L619 417ZM627 446L680 448L673 469L619 466Z"/>
          <path class="soft" d="M627 396V446M680 399V448M673 420V469M619 417V466"/>
          <path d="M892 327L945 330L938 351L885 348ZM892 376L945 379L938 399L885 396ZM892 327V376M945 330V379M938 351V399M885 348V396"/>
        </g>
        <path class="red" d="M605 360L627 396M590 402L619 417M892 280V327M885 299V348M840 324L892 327M832 345L885 348M900 306L892 327M877 368L885 348"/>
        <path class="blue" d="M710 366L680 399M695 408L673 420M945 281V330M938 301V351M945 330L998 333M938 351L991 354M953 309L945 330M930 371L938 351"/>
        <path class="green" d="M605 458L627 446M590 499L619 466M892 376V425M885 396V446M840 373L892 376M832 394L885 396M900 356L892 376M877 417L885 396"/>
        <path class="pink" d="M710 464L680 448M695 505L673 469M945 379V428M938 399V448M945 379L998 382M938 399L991 402M953 358L945 379M930 420L938 399"/>
        <circle class="orbit" cx="298" cy="724" r="7"/>
        <rect x="295.500" y="721.500" width="5" height="5" fill="#ddd" stroke="#bbb"/>
      </svg>
      <div class="tip">Parallelprojektion</div>
    </section>
  </main>

  <div class="prompt"><p>zum Auswählen, Strg+Klick zum Hinzufügen, Umschalt+Klick zur Segmentwahl</p></div>

  <footer class="status">
    <span class="hint">, um Hilfe zu erhalten.</span>
    <span class="x">X: <b>21.6824</b></span><span class="y">Y: <b>4.8206</b></span><span class="z">Z: <b>0.0000</b></span><span class="dl">dl: <b>22.2118</b></span><span class="land">Land: <em>Deutschland</em></span>
    <span class="cell typ">Zeichnungstyp: <strong>Maßstabs-Definition</strong></span>
    <span class="cell mst">Maßstab: <b>1 : 50</b></span><span class="cell len">Länge: <b>m</b></span><span class="cell win">Winkel: <b>0.000</b></span><span class="cell deg"><b>deg</b></span>
  </footer>

  <div class="taskbar">
    <button class="task cut" aria-label="Taskansicht"><svg viewBox="0 0 24 24"><path d="M2.500 5v14M0 9h1M0 15h1M3 9h2" stroke="#fff" stroke-width="1.500"/></svg></button>
    <button class="task" aria-label="Firefox"><svg viewBox="0 0 24 24"><path d="M2 9l2-4 2 2 3-3 1 3 4-6c1 3 5 4 7 8 4 8-1 14-9 14S-1 17 2 9z" fill="url(#fire)"/><circle cx="12" cy="13" r="5" fill="#7a3fd0"/><path d="M7 11c3-2 5 0 7 0-2 1-2 3-4 3s-3-1-3-3z" fill="#ff9a2e"/></svg></button>
    <button class="task" aria-label="Explorer"><svg viewBox="0 0 24 24"><path d="M2 3h8l2 2h11v16H2z" fill="#f5b83d"/><path d="M2 7h21v12H2z" fill="#ffdc70"/><path d="M6 21v-8h13v8h-4v-4h-5v4z" fill="#3d92dd"/></svg></button>
    <button class="task" aria-label="Getriebe"><svg viewBox="0 0 24 24"><rect x="1" y="1" width="22" height="22" rx="2" fill="#454545"/><circle cx="12" cy="12" r="9.500" fill="none" stroke="#e8e8e8" stroke-width="1.700"/><circle cx="12" cy="12" r="6.500" fill="none" stroke="#ddd" stroke-width="1.200"/><path d="M5 9c4 2 10 2 14 0M5 15c4-2 10-2 14 0" fill="none" stroke="#eee" stroke-width="1.800"/><path d="M8 11h8v2H8z" fill="#eee"/></svg></button>
    <button class="task open" aria-label="Editor"><svg viewBox="0 0 24 24"><path d="M8 2l15 2-3 18-5 1z" fill="#c9ccd0"/><path d="M8 2l12 2-5 18-13-3z" fill="#6ea9d6"/><path d="M8 2l12 2-2 7c-5-3-8 2-13 0z" fill="#b9dcf2"/><path d="M3 17l13 3-1 3-13-4z" fill="#e9eef2"/><path d="M20 5l3 15-5 2z" fill="#8c6b3f"/></svg></button>
    <button class="task open active" aria-label="Allplan"><svg viewBox="0 0 24 24"><rect x="1" y="1" width="22" height="22" fill="#000" stroke="#ddd"/><path d="M7.500 19l4-13h1l4 13" fill="none" stroke="#fff" stroke-width="2.600"/></svg></button>
    <button class="task open" aria-label="Krita"><svg viewBox="0 0 24 24"><path d="M13 1c3 5 8 9 8 14a9 9 0 0 1-18 0C3 9 11 8 13 1z" fill="url(#drop)"/><path d="M3 13c5 0 7 5 18 1 1 6-4 10-9 10s-9-4-9-11z" fill="#2e9be6"/><path d="M4 10c5-1 8 5 17 2v3c-9 4-11-1-18-1z" fill="#8c4fb3"/></svg></button>
    <button class="news"><svg viewBox="0 0 24 24"><path d="M2 1c5-2 9 1 9 6-1 4-3 4-3 9l3 5H3l2-5C3 12-1 6 2 1z" fill="#f6a02a"/><path d="M1 20h12v4H1z" fill="#2f8a45"/><path d="M4 15h6v4H4z" fill="#d98a1d"/><circle cx="16.500" cy="12" r="7" fill="#e8e8e8"/><path d="M16 9l3 2-1 4h-4l-1-4zM10 9l3-3M22 7v3M11 17l3-1" fill="#222" stroke="#222" stroke-width="1.500"/><path d="M12 19l8-1-5 5z" fill="#c98a36"/></svg>Mannschaften folgen</button>
    <button class="tray" aria-label="Ausgeblendete Symbole"><svg viewBox="0 0 16 16"><path d="M2 11l6-6 6 6" fill="none" stroke="#fff" stroke-width="1.300"/></svg></button>
    <button class="tray" aria-label="Akku"><svg viewBox="0 0 16 16"><path d="M3 5h11v7H3z" fill="#fff" stroke="#fff"/><path d="M14 7h2v3h-2zM0 2h4v4H0z" fill="#fff"/></svg></button>
    <button class="tray" aria-label="WLAN"><svg viewBox="0 0 16 16"><path d="M2 14C2 7 7 3 14 3M5 14c0-5 4-8 9-8M8 14c0-3 3-5 6-5M11 14c0-2 1-3 3-3" fill="none" stroke="#8b98a3" stroke-width="1.200"/><path d="M11 14c0-2 1-3 3-3v3z" fill="#fff"/></svg></button>
    <button class="tray" aria-label="Lautstärke"><svg viewBox="0 0 16 16"><path d="M1 6h2l4-3v10l-4-3H1zM9 6c1 1 1 3 0 4M11 4c2 2 2 6 0 8M13 2c3 3 3 9 0 12" fill="none" stroke="#fff" stroke-width="1.100"/></svg></button>
    <button class="lang">DEU</button>
    <div class="clock"><span class="time">13:57</span><span>24.11.20</span></div>
  </div>
</div>
</body>
</html>
```
FILE: styles.css
```css
* { box-sizing: border-box; }
html, body { height: 100%; }
body { margin: 0; overflow: hidden; font-family: "Noto Sans", "Open Sans", sans-serif; font-size: 11px; color: #222b36; background: #fff; }
button { margin: 0; padding: 0; border: 0; background: none; font: inherit; color: inherit; }
svg { display: block; flex: none; width: 16px; height: 16px; }
select { appearance: none; border: 0; border-radius: 0; margin: 0; font: inherit; color: inherit; background: #fff; }
.defs { position: absolute; width: 0; height: 0; }
.app { display: flex; flex-direction: column; height: 100vh; overflow: hidden; }

.titlebar { display: grid; grid-template-columns: 1fr auto 1fr; align-items: center; height: 24px; flex: none; background: linear-gradient(#d3e1f0, #b3c8df 45%, #8facce); }
.titlebar h1 { margin: 0; padding-left: 206px; padding-top: 2px; font-size: 12px; line-height: 16px; font-weight: 400; color: #26313f; white-space: nowrap; }
.quick { display: flex; align-items: center; width: 300px; margin: 0 0 2px -8px; }
.q { display: flex; align-items: center; justify-content: center; width: 20px; flex: none; }
.dd { width: 8px; height: 8px; margin: 0 1px; color: #4a6b95; }
.pale { color: #a8a9ab; }
.more { margin-left: 13px; }
.account { display: flex; justify-content: flex-end; align-items: center; margin-bottom: 4px; }
.login { display: flex; align-items: center; gap: 4px; margin-right: 6px; font-size: 10px; }

.menu { display: flex; gap: 13px; height: 21px; flex: none; align-items: center; padding-left: 0; background: #e4ebf5; }
.menu button:first-child { margin-left: -3px; }

.toolbar { display: flex; height: 31px; flex: none; background: #e4ebf5; border-top: 1px solid #d0d2d6; border-bottom: 2px solid #b7bccb; }
.grp { display: flex; align-items: center; border-right: 1px solid #bcc5d3; background: linear-gradient(#e6edf6, #cbdcf0); }
.tb { display: flex; align-items: center; justify-content: center; width: 23px; height: 24px; flex: none; }
.slim { width: 19px; }
.g1 { width: 100px; padding-left: 2px; }
.g2 { width: 35px; padding-left: 5px; }
.g3 { width: 79px; padding-left: 5px; }
.g4 { width: 196px; padding-left: 6px; }
.g5 { width: 31px; padding-left: 4px; }
.g6 { width: 532px; margin-left: 4px; padding-left: 3px; border-left: 1px solid #bcc5d3; }
.g7 { width: 122px; padding-left: 5px; }
.combo { position: relative; width: 91px; height: 20px; margin-right: 1px; display: flex; flex: none; }
.combo select { width: 100%; height: 20px; padding: 0 0 0 3px; font-size: 11px; font-weight: 700; color: #111; }
.combo .in10 { padding-left: 10px; }
.combo .in17 { padding-left: 17px; }
.combo.layer { width: 117px; }
.layer select { font-size: 12px; }
.drop { width: 10px; height: 10px; color: #a9adb0; }
.dark { color: #222; }
.arr { position: absolute; right: 0; top: 0; width: 16px; height: 100%; padding: 0 4px; color: #222; background: linear-gradient(#e6eef8, #c0d4ec); border: 1px solid #b8cbe3; pointer-events: none; }
.line { position: absolute; left: 30px; top: 5px; width: 42px; height: 10px; }
.wide { left: 20px; width: 50px; }
.swatch { position: absolute; left: 25px; top: 3px; width: 47px; height: 14px; background: #0ff; border: 1px solid #333; }
.wave { position: absolute; left: 29px; top: 4px; width: 40px; height: 12px; }

.work { display: flex; flex: 1; min-height: 0; background: #e9eff7; }
.panel { display: flex; flex-direction: column; width: 277px; flex: none; background: #fff; border-right: 2px solid #c0cee0; border-bottom: 1px solid #b7c9e0; }
.phead { display: flex; justify-content: flex-end; align-items: center; gap: 8px; height: 17px; flex: none; padding: 0 3px 2px 0; background: linear-gradient(#eaf0f8, #d3e0f0); border-bottom: 1px solid #b7c9e0; }
.phead svg { width: 10px; height: 10px; }
.tabs { display: flex; gap: 4px; height: 24px; flex: none; padding-top: 6px; border-bottom: 1px solid #b3cbe8; }
.tabs button { width: 40px; flex: none; border: 1px solid #94b0d3; border-bottom: 0; border-radius: 5px 5px 0 0; background: linear-gradient(#f5f8fc, #bcd0ea); font-size: 10px; white-space: nowrap; }
.tabs .first { width: 14px; border-left: 0; border-radius: 0 5px 0 0; }
.tabs .last { width: 33px; }
.pbody { display: flex; flex-direction: column; flex: 1; min-height: 0; padding-right: 3px; }
.find { display: flex; align-items: center; height: 28px; flex: none; }
.mod { position: relative; width: 250px; height: 23px; border: 1px solid #a7c0e0; border-left: 0; }
.mod select { width: 100%; height: 21px; font-size: 10px; text-indent: -2px; }
.pal { display: flex; flex: 1; min-height: 0; margin-bottom: 4px; }
.groups { display: flex; flex-direction: column; width: 251px; border-right: 1px solid #8fb1da; border-bottom: 2px solid #a9c2e2; border-top: 2px solid #bcd2ec; }
.group { display: flex; justify-content: space-between; background: linear-gradient(90deg, #d5e2f2, #fff) 0 9px / 100% 1px no-repeat; }
.one { height: 398px; flex: none; padding-top: 25px; }
.two { flex: 1; min-height: 0; padding-top: 25px; overflow: hidden; }
.tools { display: grid; grid-template-columns: repeat(3, 63px); grid-auto-rows: 48px; padding-left: 2px; }
.tools button { display: block; font-size: 10px; line-height: 11px; white-space: nowrap; align-self: start; }
.tools svg { margin: 0 auto 7px; }
.scroll { display: flex; flex-direction: column; align-items: center; width: 11px; margin-right: 9px; padding-top: 4px; }
.scroll b { width: 11px; height: 266px; flex: none; margin: 6px 0 82px; border: 1px solid #a3b7d0; border-radius: 3px; background: repeating-linear-gradient(#c4d6ec 0 1px, transparent 1px 2px) center / 5px 7px no-repeat; }
.two .scroll b { height: 87px; margin: 6px 0 48px; }
.up, .down { border: 3px solid transparent; }
.up { border-bottom-color: #a9c6e8; border-top: 0; }
.down { border-top-color: #a9c6e8; border-bottom: 0; }
.side { display: flex; flex-direction: column; gap: 2px; }
.side button { display: flex; align-items: center; justify-content: center; width: 20px; height: 25px; border: 1px solid #a3bfe2; border-left: 0; border-radius: 0 4px 4px 0; background: #f6f9fd; }
.side .on { width: 22px; height: 27px; margin-left: -1px; background: #fff; }
.side svg { width: 17px; height: 17px; }

.canvas { position: relative; flex: 1; margin-left: 4px; background: #fff; border-left: 2px solid #b9bdcc; }
.drawing { width: 100%; height: 100%; fill: none; stroke-width: 1; }
.cyan { stroke: #3ff; }
.orange { stroke: #ffa24d; }
.soft { opacity: .8; }
.red { stroke: #f33; }
.blue { stroke: #33e; }
.green { stroke: #3e3; }
.pink { stroke: #f3f; }
.orbit { stroke: #5a7fae; stroke-width: 2; stroke-dasharray: 4 2; }
.tip { position: absolute; left: 484px; top: 0; padding: 0 6px; height: 24px; line-height: 23px; font-family: "Liberation Sans", sans-serif; font-size: 13px; color: #7189a6; background: #e8eef7; border: 1px solid #b1bccb; border-top: 0; white-space: nowrap; }

.prompt { display: flex; height: 28px; flex: none; background: #e4ebf5; border-top: 1px solid #e9ece9; border-bottom: 1px solid #c0c8d4; }
.prompt p { width: 432px; margin: 0; line-height: 26px; text-indent: -3px; font-family: "Open Sans", sans-serif; font-size: 11px; font-weight: 700; color: #111; background: #fff; border-right: 1px solid #c5cedb; white-space: nowrap; }
.status { display: flex; align-items: center; height: 20px; flex: none; padding-top: 3px; background: #fff; color: #777; white-space: nowrap; font-size: 10px; }
.status b, .status em { margin-left: 5px; font-weight: 400; font-style: normal; color: #444; }
.status em { color: #777; font-size: 11px; }
.status strong { margin-left: 8px; font-weight: 400; color: #222; font-size: 11px; }
.status .hint { width: 208px; font-size: 11px; }
.x { width: 73px; }
.y { width: 74px; }
.z { width: 74px; }
.dl { width: 75px; }
.land { width: 174px; }
.cell { padding-left: 3px; border-left: 1px solid #ddd; height: 16px; line-height: 16px; }
.typ { flex: 1; }
.mst { width: 119px; }
.len { width: 89px; }
.win { width: 90px; }
.deg { width: 30px; }
.deg b { margin: 0; }

.taskbar { display: flex; align-items: center; height: 38px; flex: none; color: #fff; background: linear-gradient(90deg, #22373f, #213640 55%, #1b2d40 75%, #1b2a40); }
.task { display: flex; align-items: center; justify-content: center; width: 40px; height: 38px; margin-right: 8px; flex: none; border-bottom: 2px solid transparent; }
.task svg, .news svg { width: 24px; height: 24px; }
.cut { width: 16px; justify-content: flex-start; }
.open { border-bottom-color: #76b9ed; }
.active { width: 47px; margin: 0 4px 0 -5px; background: #4c5d66; }
.news { display: flex; align-items: center; gap: 7px; margin-left: auto; margin-right: 10px; font-family: "Open Sans", sans-serif; font-size: 13px; white-space: nowrap; }
.tray { width: 23px; display: flex; justify-content: center; }
.lang { margin: 0 11px 0 6px; font-size: 12px; }
.clock { display: flex; flex-direction: column; width: 36px; flex: none; font-family: "Open Sans", sans-serif; font-size: 11px; line-height: 17px; overflow: hidden; }
.time { padding-left: 11px; }
```
